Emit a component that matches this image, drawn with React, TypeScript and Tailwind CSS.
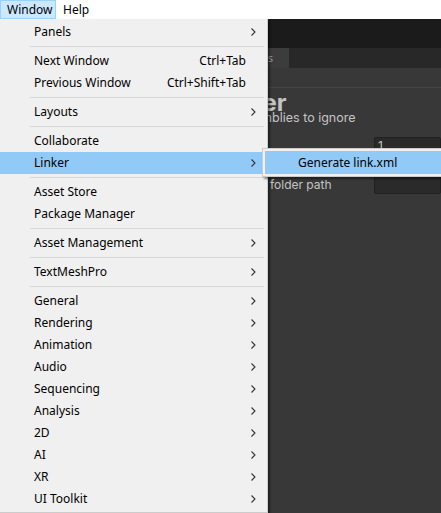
import React from "react";

type Entry = { label?: string; shortcut?: string; sub?: boolean; sep?: boolean; active?: boolean };

const items: Entry[] = [
  { label: "Panels", sub: true },
  { sep: true },
  { label: "Next Window", shortcut: "Ctrl+Tab" },
  { label: "Previous Window", shortcut: "Ctrl+Shift+Tab" },
  { sep: true },
  { label: "Layouts", sub: true },
  { sep: true },
  { label: "Collaborate" },
  { label: "Linker", sub: true, active: true },
  { sep: true },
  { label: "Asset Store" },
  { label: "Package Manager" },
  { sep: true },
  { label: "Asset Management", sub: true },
  { sep: true },
  { label: "TextMeshPro", sub: true },
  { sep: true },
  { label: "General", sub: true },
  { label: "Rendering", sub: true },
  { label: "Animation", sub: true },
  { label: "Audio", sub: true },
  { label: "Sequencing", sub: true },
  { label: "Analysis", sub: true },
  { label: "2D", sub: true },
  { label: "AI", sub: true },
  { label: "XR", sub: true },
  { label: "UI Toolkit", sub: true },
];

const Chevron = () => (
  <svg width="5" height="8" viewBox="0 0 5 8" className="shrink-0">
    <path d="M0.5 0.5 L4 4 L0.5 7.5" fill="none" stroke="#333" strokeWidth="1.1" />
  </svg>
);

const App = () => {
  return (
    <div
      className="relative w-[441px] h-[513px] overflow-hidden bg-[#383838] text-[12px]"
      style={{ fontFamily: "'Noto Sans', 'Segoe UI', sans-serif" }}
    >
      {/* menu bar */}
      <div className="flex h-[19px] bg-white items-stretch text-black">
        <div className="flex items-center px-[6px] bg-[#cce8ff] border border-[#99d1ff] w-[56px]">Window</div>
        <div className="flex items-center px-[7px]">Help</div>
      </div>

      {/* unity editor behind */}
      <div className="h-[29px] bg-[#1b1b1b]" />
      <div className="flex h-[20px] bg-[#282828]">
        <div className="w-[289px] bg-[#3c3c3c] flex items-center justify-end pr-[16px] text-[#9a9a9a] text-[11px]">Linker Settings</div>
      </div>
      <div className="h-[20px] bg-[#383838] border-b border-[#454545]" />
      <div className="text-[#c4c4c4]" style={{ fontFamily: "Inter, sans-serif" }}>
        <div className="h-[24px] pt-[3px] leading-[24px] pl-[214px] text-[24px] font-bold">Linker</div>
        <div className="h-[12px] flex items-center pl-[232px] text-[12.5px]">Assemblies to ignore</div>
        <div className="h-[13px]" />
        <div className="flex flex-col gap-[2px] pl-[228px]">
          <div className="h-[17px] flex items-center">
            <span className="w-[146px]">Size</span>
            <div className="flex-1 h-[17px] bg-[#2a2a2a] border border-[#212121] rounded-[2px] pl-[3px] leading-[15px]">1</div>
          </div>
          <div className="h-[18px] flex items-center">
            <span className="w-[146px]">Element 0</span>
            <div className="flex-1 h-[17px] bg-[#2a2a2a] border border-[#212121] rounded-[2px]" />
          </div>
          <div className="h-[19px] flex items-center -mt-px">
            <span className="w-[146px] text-[12px]">Output folder path</span>
            <div className="flex-1 h-[19px] bg-[#2a2a2a] border border-[#212121] rounded-[2px]" />
          </div>
        </div>
      </div>

      {/* window menu */}
      <div className="absolute left-0 top-[19px] w-[268px] bg-[#f0f0f0] border-r border-b border-[#cccccc] py-[2px] text-black shadow-[2px_2px_2px_rgba(0,0,0,0.45)]">
        {items.map((it, i) =>
          it.sep ? (
            <div key={i} className="h-[7px] flex items-center pl-[30px] pr-[3px]">
              <div className="h-px w-full bg-[#d7d7d7]" />
            </div>
          ) : (
            <div
              key={i}
              className={`h-[22px] flex items-center pl-[34px] pr-[11px] ${it.active ? "bg-[#91c9f7]" : ""}`}
            >
              <span className="flex-1">{it.label}</span>
              {it.shortcut && <span className="mr-[10px]">{it.shortcut}</span>}
              {it.sub && <Chevron />}
            </div>
          )
        )}
      </div>

      {/* linker submenu */}
      <div className="absolute left-[262px] top-[148px] w-[190px] bg-[#f0f0f0] border border-[#cccccc] p-[2px] text-black shadow-[2px_2px_2px_rgba(0,0,0,0.45)]">
        <div className="h-[23px] flex items-center pl-[33px] bg-[#91c9f7]">Generate link.xml</div>
      </div>
    </div>
  );
};

export default App;
